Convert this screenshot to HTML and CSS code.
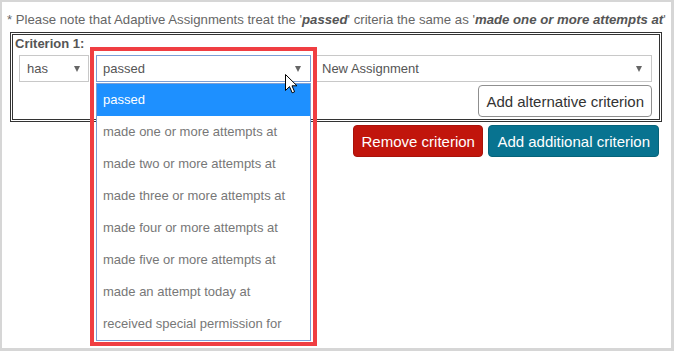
FILE: index.html
```html
<!DOCTYPE html>
<html>
<head>
<meta charset="utf-8">
<link rel="stylesheet" href="styles.css">
</head>
<body>
<div class="frame">
  <p class="note">* Please note that Adaptive Assignments treat the '<b><i>passed</i></b>' criteria the same as '<b><i>made one or more attempts at</i></b>'</p>
  <div class="criterion">
    <div class="crit-label">Criterion 1:</div>
    <div class="selects">
      <div class="select sel-has"><span>has</span><i class="caret"></i></div>
      <div class="select-wrap">
        <div class="select sel-status focused"><span>passed</span><i class="caret"></i></div>
        <ul class="dropdown">
          <li class="active">passed</li>
          <li>made one or more attempts at</li>
          <li>made two or more attempts at</li>
          <li>made three or more attempts at</li>
          <li>made four or more attempts at</li>
          <li>made five or more attempts at</li>
          <li>made an attempt today at</li>
          <li>received special permission for</li>
        </ul>
      </div>
      <div class="select sel-assign"><span>New Assignment</span><i class="caret"></i></div>
    </div>
    <div class="alt-row"><button class="btn btn-alt">Add alternative criterion</button></div>
  </div>
  <div class="actions">
    <button class="btn btn-remove">Remove criterion</button>
    <button class="btn btn-add">Add additional criterion</button>
  </div>
  <div class="highlight"></div>
  <svg class="cursor" width="13" height="20" viewBox="0 0 13 20"><path d="M0.5 0.5 L0.5 16.5 L4.5 12.6 L7.2 18.8 L9.6 17.8 L7 11.8 L12 11.8 Z" fill="#fff" stroke="#000" stroke-width="1" stroke-linejoin="miter"/></svg>
</div>
</body>
</html>
```
FILE: styles.css
```css
body {
  margin: 0;
  font-family: "Liberation Sans", Arial, sans-serif;
  background: #fff;
}
.frame {
  position: relative;
  box-sizing: border-box;
  width: 674px;
  height: 351px;
  border: 2px solid #d6d6d6;
  border-right-width: 3px;
  border-bottom-width: 3px;
  padding: 10px 9px 0 8px;
  background: #fff;
}
.note {
  margin: 0 -3px 4px;
  font-size: 13.2px;
  line-height: 16px;
  color: #666;
  white-space: nowrap;
}
.note b { color: #555; }
.criterion {
  border: 3px double #333;
  padding: 0 7px 2px 2px;
}
.crit-label {
  font-size: 13px;
  font-weight: bold;
  line-height: 16px;
  padding-top: 1px;
  color: #555;
}
.selects {
  display: flex;
  margin: 3px 0 0 4px;
}
.select {
  box-sizing: border-box;
  height: 27px;
  border: 1px solid #c8c8c8;
  display: flex;
  align-items: center;
  justify-content: space-between;
  padding: 0 8px 0 7px;
  font-size: 13px;
  color: #555;
  background: #fff;
}
.caret {
  width: 0;
  height: 0;
  border-left: 3.5px solid transparent;
  border-right: 3.5px solid transparent;
  border-top: 6px solid #666;
}
.sel-has { width: 70px; }
.select-wrap {
  position: relative;
  width: 215px;
  margin-left: 7px;
}
.sel-status { width: 100%; padding-left: 6px; padding-right: 9px; }
.focused { border-color: #7b9ed6; }
.sel-assign {
  width: 337px;
  margin-left: 4px;
  padding-left: 6px;
  padding-right: 9px;
}
.dropdown {
  position: absolute;
  top: 100%;
  left: 0;
  width: 100%;
  box-sizing: border-box;
  margin: 1px 0 0;
  padding: 0;
  list-style: none;
  background: #fff;
  border: 1px solid #7b9ed6;
  z-index: 2;
}
.dropdown li {
  height: 32px;
  line-height: 32px;
  padding-left: 6px;
  font-size: 13px;
  color: #777;
  white-space: nowrap;
}
.dropdown li.active {
  background: #1e90ff;
  color: #fff;
}
.alt-row {
  display: flex;
  justify-content: flex-end;
  margin-top: 3px;
}
.btn {
  box-sizing: border-box;
  height: 32px;
  padding: 0 8px;
  font-family: "Liberation Sans", Arial, sans-serif;
  font-size: 15px;
  border-radius: 4px;
  border: 1px solid #999;
  cursor: default;
}
.btn-alt {
  background: #fff;
  color: #333;
  border-color: #8f8f8f;
  padding: 0 7px;
}
.actions {
  display: flex;
  justify-content: flex-end;
  gap: 5px;
  margin: 3px 3px 0 0;
}
.btn-remove {
  background: #c1150c;
  border-color: #a8120a;
  color: #fff;
  padding: 0 7.5px;
}
.btn-add {
  background: #087390;
  border-color: #066379;
  color: #fff;
}
.highlight {
  position: absolute;
  left: 88px;
  top: 45px;
  width: 227px;
  height: 299px;
  box-sizing: border-box;
  border: 4px solid #f03e42;
  z-index: 3;
  pointer-events: none;
}
.cursor {
  position: absolute;
  left: 283px;
  top: 72px;
  z-index: 4;
}
```
